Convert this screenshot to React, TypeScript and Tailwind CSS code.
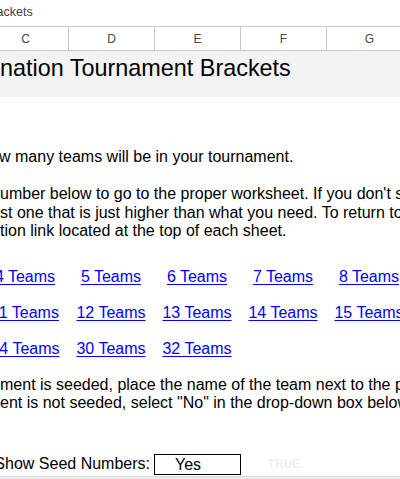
import React from "react";

const columns = ["C", "D", "E", "F", "G"];

const linkRows: (string | null)[][] = [
  ["4 Teams", "5 Teams", "6 Teams", "7 Teams", "8 Teams"],
  ["11 Teams", "12 Teams", "13 Teams", "14 Teams", "15 Teams"],
  ["24 Teams", "30 Teams", "32 Teams", null, null],
];

const Cell: React.FunctionComponent<{ children?: React.ReactNode }> = ({ children }) => (
  <div className="w-[86px] shrink-0 flex justify-center whitespace-nowrap">{children}</div>
);

const App: React.FunctionComponent<{}> = () => {
  return (
    <div
      className="w-[400px] h-[479px] overflow-hidden bg-white text-black flex flex-col"
      style={{ fontFamily: '"Liberation Sans", Arial, sans-serif' }}
    >
      {/* formula bar */}
      <div className="h-[27px] shrink-0 border-b border-[#c7c7c7] flex items-start">
        <span className="ml-[-16px] mt-[4px] text-[12.5px] leading-[16px] text-[#3c4043] whitespace-nowrap">
          Brackets
        </span>
      </div>

      {/* column headers */}
      <div className="h-[24px] shrink-0 border-b border-[#c7c7c7] flex ml-[-18px]">
        {columns.map((col) => (
          <div
            key={col}
            className="w-[86px] shrink-0 border-l border-[#c7c7c7] flex items-center justify-center text-[12px] text-[#444746]"
          >
            {col}
          </div>
        ))}
      </div>

      {/* title row */}
      <div className="h-[46px] shrink-0 bg-[#f3f3f3]">
        <div className="pt-[2px] text-[23.4px] leading-[30px] whitespace-nowrap">
          nation Tournament Brackets
        </div>
      </div>

      {/* instructions */}
      <div className="pt-[51px] text-[16px] leading-[18.5px] whitespace-nowrap">
        <div className="ml-[-1px]">w many teams will be in your tournament.</div>
        <div className="h-[18.5px]" />
        <div>umber below to go to the proper worksheet. If you don't see yours,</div>
        <div>st one that is just higher than what you need. To return to this page,</div>
        <div>tion link located at the top of each sheet.</div>
      </div>

      {/* bracket links */}
      <div className="mt-[18px] ml-[-18px] flex flex-col text-[16px] leading-[36px]">
        {linkRows.map((row, i) => (
          <div key={i} className="flex">
            {row.map((label, j) => (
              <Cell key={j}>
                {label && (
                  <a href="#" className="text-[#0000ff] underline underline-offset-[2px]">
                    {label}
                  </a>
                )}
              </Cell>
            ))}
          </div>
        ))}
      </div>

      {/* seeding notes */}
      <div className="mt-[9px] text-[16px] leading-[18.5px] whitespace-nowrap">
        <div>ment is seeded, place the name of the team next to the proper seed number.</div>
        <div>ent is not seeded, select "No" in the drop-down box below.</div>
      </div>

      {/* seed toggle */}
      <div className="mt-[41.5px] h-[21px] flex items-stretch text-[16px] leading-[19px]">
        <div className="w-[154px] shrink-0 flex justify-end pr-[4px] whitespace-nowrap">Show Seed Numbers:</div>
        <div className="w-[87px] shrink-0 border border-black pl-[20px]">Yes</div>
        <div className="w-[86px] shrink-0 flex items-center justify-center text-[12px] font-bold text-[#efefef]">
          TRUE
        </div>
      </div>

      {/* scroll area edge */}
      <div className="mt-[1px] flex-1 border-t border-[#dadce0] bg-[#ececec]" />
    </div>
  );
};

export default App;
